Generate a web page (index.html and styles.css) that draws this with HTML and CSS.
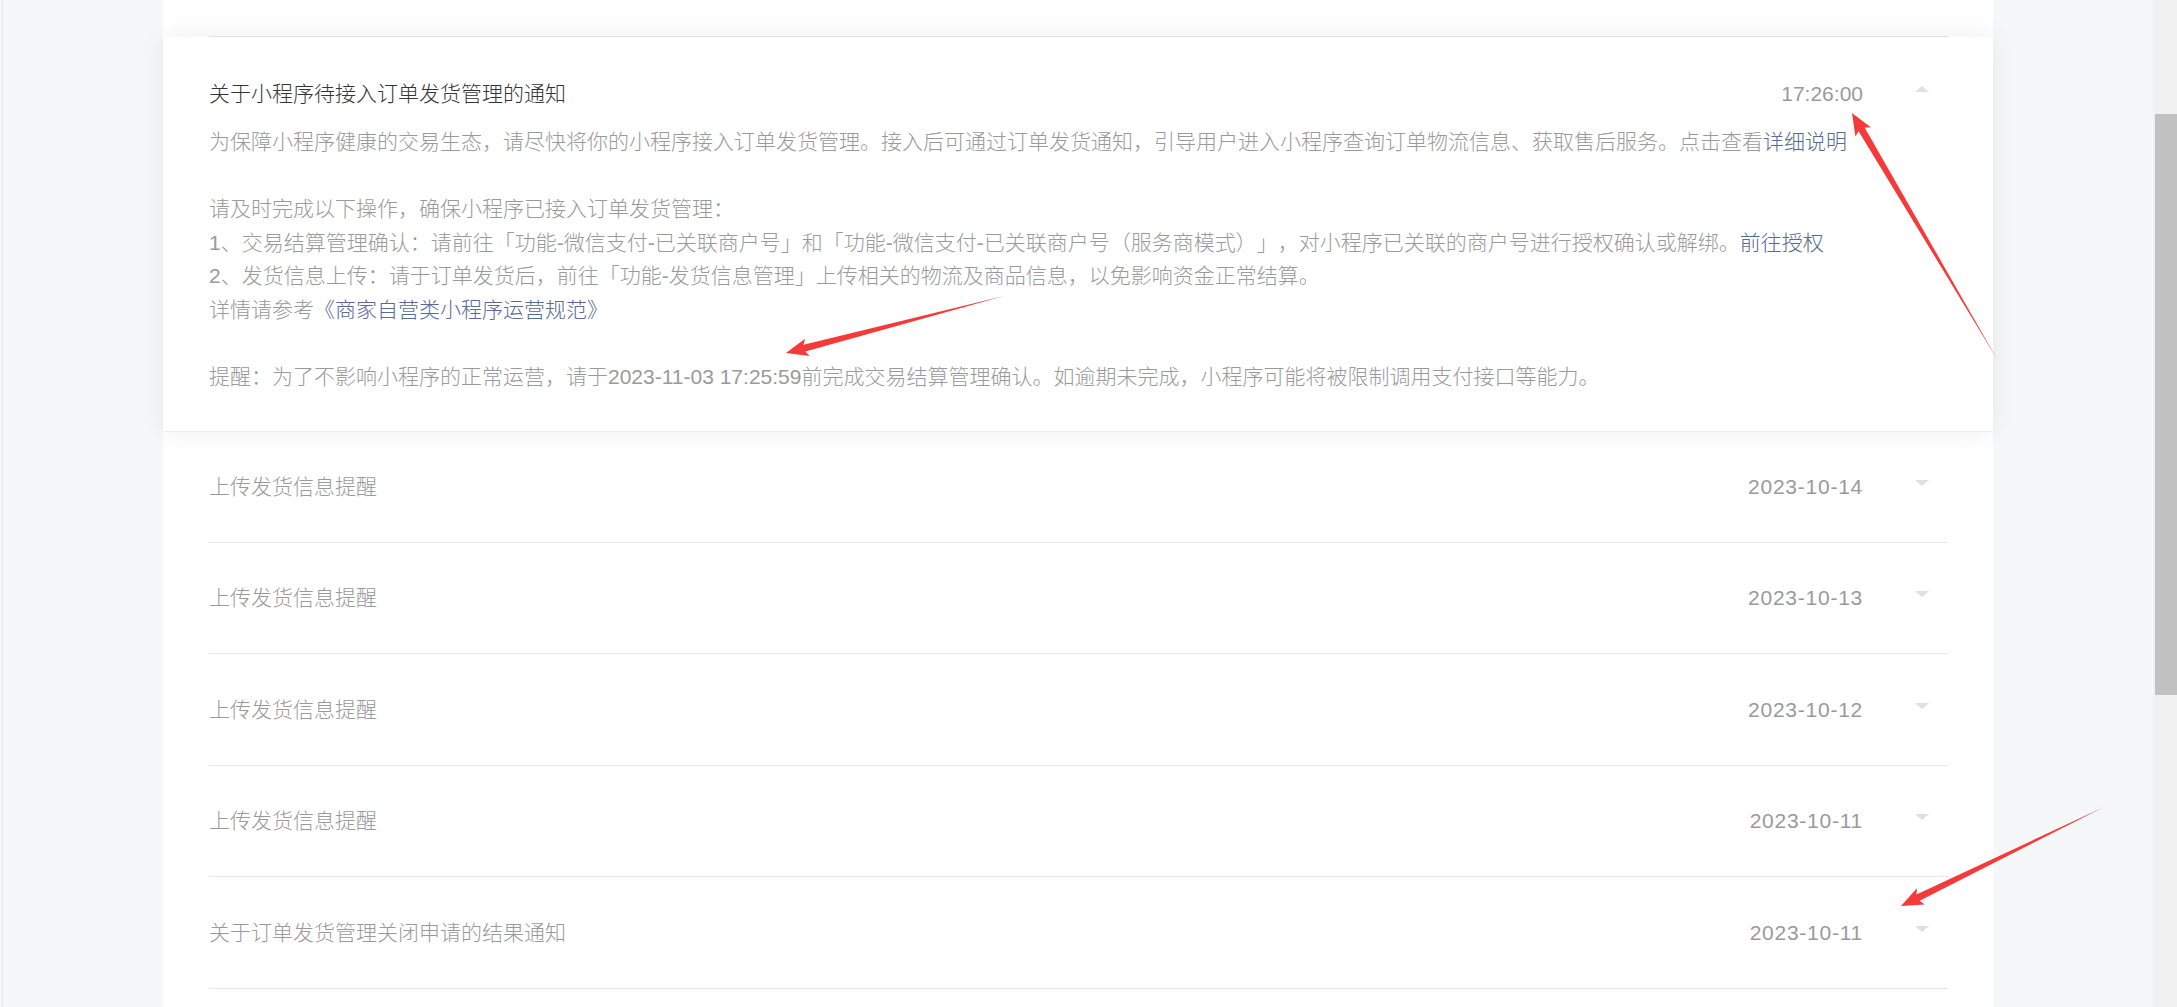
FILE: index.html
```html
<!DOCTYPE html>
<html lang="zh-CN">
<head>
<meta charset="utf-8">
<title>通知</title>
<link rel="stylesheet" href="styles.css">
</head>
<body>
<div class="app">
  <div class="gutter"></div>
  <main class="panel">
    <div class="row-prev"></div>
    <section class="item">
      <div class="head">
        <span class="title">关于小程序待接入订单发货管理的通知</span>
        <span class="time">17:26:00</span>
        <span class="caret up"></span>
      </div>
      <p class="desc">为保障小程序健康的交易生态，请尽快将你的小程序接入订单发货管理。接入后可通过订单发货通知，引导用户进入小程序查询订单物流信息、获取售后服务。点击查看<a href="#">详细说明</a><br><br>请及时完成以下操作，确保小程序已接入订单发货管理：<br>1、交易结算管理确认：请前往「功能-微信支付-已关联商户号」和「功能-微信支付-已关联商户号（服务商模式）」，对小程序已关联的商户号进行授权确认或解绑。<a href="#">前往授权</a><br>2、发货信息上传：请于订单发货后，前往「功能-发货信息管理」上传相关的物流及商品信息，以免影响资金正常结算。<br>详情请参考<a href="#">《商家自营类小程序运营规范》</a><br><br>提醒：为了不影响小程序的正常运营，请于2023-11-03 17:25:59前完成交易结算管理确认。如逾期未完成，小程序可能将被限制调用支付接口等能力。</p>
    </section>
    <div class="row"><span class="name">上传发货信息提醒</span><span class="date">2023-10-14</span><span class="caret down"></span></div>
    <div class="row"><span class="name">上传发货信息提醒</span><span class="date">2023-10-13</span><span class="caret down"></span></div>
    <div class="row"><span class="name">上传发货信息提醒</span><span class="date">2023-10-12</span><span class="caret down"></span></div>
    <div class="row"><span class="name">上传发货信息提醒</span><span class="date">2023-10-11</span><span class="caret down"></span></div>
    <div class="row"><span class="name">关于订单发货管理关闭申请的结果通知</span><span class="date">2023-10-11</span><span class="caret down"></span></div>
  </main>
  <div class="aside"></div>
  <div class="scrollbar"><div class="thumb"></div></div>
</div>
<svg class="marks" viewBox="0 0 2177 1007" xmlns="http://www.w3.org/2000/svg">
  <polygon points="1997,359 1864.6,127.6 1871.0,127.4 1852,113 1855.4,136.6 1858.6,131.2" fill="#f53a3a"/>
  <polygon points="1004,296 803.5,344.8 805.0,338.7 786,353 809.6,356.1 805.3,351.6" fill="#f53a3a"/>
  <polygon points="2104,807 1916.5,894.5 1916.9,888.3 1901,906 1924.7,904.5 1919.6,900.8" fill="#f53a3a"/>
</svg>
</body>
</html>
```
FILE: styles.css
```css
html, body {
  margin: 0;
  padding: 0;
}
body {
  width: 2177px;
  height: 1007px;
  overflow: hidden;
  background: #f6f7f9;
  font-family: "Liberation Sans", "Noto Sans CJK SC", sans-serif;
  font-size: 21px;
  font-weight: 300;
  text-spacing-trim: space-all;
  position: relative;
}
.app {
  display: flex;
  height: 1007px;
}
.gutter {
  width: 160px;
  margin-left: 2px;
  border-left: 1px solid #e6e7eb;
  flex: none;
}
.panel {
  width: 1830px;
  flex: none;
  background: #fff;
}
.aside {
  flex: 1;
}
.scrollbar {
  width: 24px;
  flex: none;
  background: #f1f1f1;
  padding-top: 114px;
  box-sizing: border-box;
}
.thumb {
  margin-left: 2px;
  width: 22px;
  height: 581px;
  background: #c1c1c1;
}
.row-prev {
  height: 36px;
  margin: 0 45px 0 46px;
  border-bottom: 1px solid #e7e7eb;
}
.item {
  background: #fff;
  box-shadow: 0 0 26px rgba(0, 0, 0, 0.07), 0 1px 1px rgba(0, 0, 0, 0.04);
  padding: 40px 45px 38px 46px;
}
.head {
  display: flex;
  align-items: center;
  line-height: 33.5px;
}
.title {
  flex: 1;
  color: #353535;
}
.time {
  color: #9a9a9a;
}
.caret {
  width: 0;
  height: 0;
  border-left: 7px solid transparent;
  border-right: 7px solid transparent;
  margin: 0 19px 8px 52px;
  flex: none;
}
.caret.up {
  border-bottom: 6px solid #dfdfe5;
  margin-bottom: 9px;
}
.caret.down {
  border-top: 6px solid #dfdfe5;
}
.desc {
  margin: 14.75px 0 0;
  color: #9a9a9a;
  line-height: 33.5px;
}
.desc a {
  color: #576b95;
  text-decoration: none;
}
.row {
  height: 111.5px;
  box-sizing: border-box;
  margin: 0 45px 0 46px;
  border-bottom: 1px solid #e7e7eb;
  display: flex;
  align-items: center;
  color: #9a9a9a;
  line-height: 33.5px;
}
.row .name {
  flex: 1;
}
.row .date {
  letter-spacing: 0.75px;
}
.marks {
  position: absolute;
  left: 0;
  top: 0;
  width: 2177px;
  height: 1007px;
  pointer-events: none;
}
```
